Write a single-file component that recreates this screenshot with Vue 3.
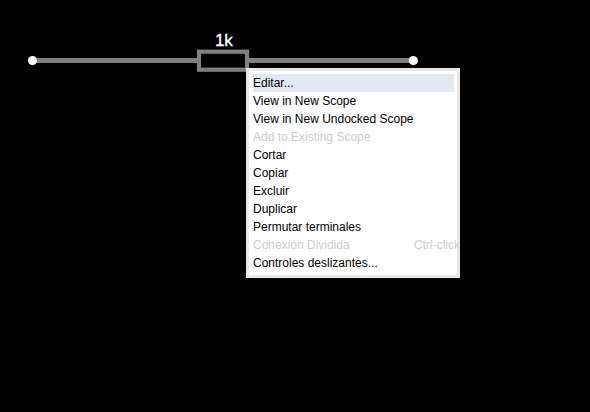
<script setup>
import { ref } from 'vue'

const active = ref(0)

const items = [
  { label: 'Editar...' },
  { label: 'View in New Scope' },
  { label: 'View in New Undocked Scope' },
  { label: 'Add to Existing Scope', disabled: true },
  { label: 'Cortar' },
  { label: 'Copiar' },
  { label: 'Excluir' },
  { label: 'Duplicar' },
  { label: 'Permutar terminales' },
  { label: 'Conexión Dividida', shortcut: 'Ctrl-click', disabled: true },
  { label: 'Controles deslizantes...' }
]

const select = (index) => {
  if (!items[index].disabled) {
    active.value = index
  }
}
</script>

<template>
  <div class="workspace">
    <svg class="circuit" width="590" height="412" viewBox="0 0 590 412">
      <g fill="none" stroke="#808080">
        <path d="M32.5 60.5H197M249 60.5H413" stroke-width="4.8" />
        <rect x="199" y="51.7" width="48" height="18" stroke-width="4.2" />
      </g>
      <circle cx="32.5" cy="60.6" r="4.6" fill="#fff" />
      <circle cx="413.3" cy="60.6" r="4.6" fill="#fff" />
      <text class="value" x="223.9" y="46" text-anchor="middle">1k</text>
    </svg>

    <ul class="menu">
      <li
        v-for="(item, index) in items"
        :key="item.label"
        class="item"
        :class="{ active: index === active, disabled: item.disabled }"
        @mouseenter="select(index)"
      >
        <span>{{ item.label }}</span>
        <span v-if="item.shortcut" class="shortcut">{{ item.shortcut }}</span>
      </li>
    </ul>
  </div>
</template>

<style>
body {
  margin: 0;
  background: #000;
}
</style>

<style scoped>
.workspace {
  position: relative;
  width: 590px;
  height: 412px;
  overflow: hidden;
  background: #000;
  font-family: "Liberation Sans", Arial, sans-serif;
}

.circuit {
  display: block;
}

.value {
  fill: #fff;
  stroke: #fff;
  stroke-width: 0.35px;
  font-size: 17px;
}

/* popup opened over the canvas */
.menu {
  position: absolute;
  left: 246px;
  top: 68px;
  box-sizing: border-box;
  width: 214px;
  height: 210px;
  margin: 0;
  padding: 3px 3px 3px 4px;
  border: 3px solid #e8e8e8;
  background: #fff;
  list-style: none;
}

.item {
  display: flex;
  justify-content: space-between;
  height: 18px;
  line-height: 18px;
  font-size: 12px;
  color: #000;
  white-space: nowrap;
  cursor: default;
}

.item.active {
  background: #e3e8f3;
}

.item.disabled {
  color: #ccc;
}

.shortcut {
  margin-right: -6px;
}
</style>
